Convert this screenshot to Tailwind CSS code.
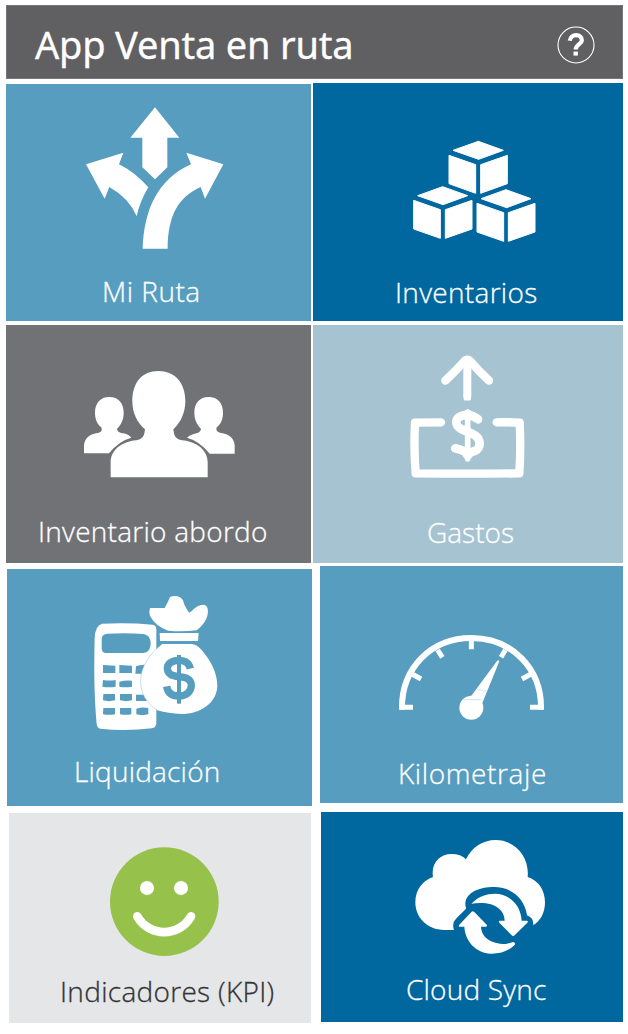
<!DOCTYPE html>
<html lang="es">
<head>
    <meta charset="UTF-8">
    <meta name="viewport" content="width=device-width, initial-scale=1.0">
    <title>App Venta en ruta</title>
    <script src="https://cdn.jsdelivr.net/npm/@tailwindcss/browser@4"></script>
</head>
<body class="bg-white">
    <div class="w-[628px] h-[1034px] pt-[5px] pl-[6px] overflow-hidden font-['Open_Sans',sans-serif] text-white">
        <header class="w-[617px] h-[74px] bg-[#606062] border border-[#77777a] flex items-center justify-between pl-[28px] pr-[27px]">
            <h1 class="text-[38px] leading-none tracking-[-0.2px] pt-[3px] whitespace-nowrap font-['Noto_Sans',sans-serif] [-webkit-text-stroke:0.3px_white]">App Venta en ruta</h1>
            <svg class="w-[38px] h-[38px] mt-[6px]" viewBox="0 0 38 38" fill="none" stroke="white">
                <circle cx="19" cy="19" r="18" stroke-width="1.1"/>
                <path d="M12.8 14.8C13.2 11 16 9.2 19.1 9.2C22.6 9.2 24.9 11.2 24.9 14.2C24.9 18.2 18.7 18.3 18.7 23.6" stroke-width="4.2"/>
                <path d="M18.7 25.6v4" stroke-width="4.4"/>
            </svg>
        </header>

        <main class="flex items-start gap-[2px] mt-[4px] text-[28px] leading-[32px] font-light whitespace-nowrap [-webkit-text-stroke:0.3px_currentColor]">
            <!-- Columna izquierda -->
            <div class="w-[305px] shrink-0 mt-px">
                <section class="w-[305px] h-[237px] bg-[#569dc0] flex flex-col items-start">
                    <svg class="w-[170px] h-[170px] ml-[64px] mt-[6px] shrink-0" viewBox="0 0 510 510" fill="white">
                        <path d="M255 52L328 143H292V232L255 268L217 232V143H181Z"/>
                        <path d="M48 223L160 188L147 223Q194 246 235 292Q210 333 200 379Q177 324 118 291L104 326Z"/>
                        <path d="M218 476C222 360 263 268 363 223L349 188L460 223L405 326L392 291C324 322 294 376 293 476Z"/>
                    </svg>
                    <p class="mt-[15px] ml-[96px] tracking-[0.5px]">Mi Ruta</p>
                </section>

                <section class="w-[305px] h-[238px] mt-[4px] bg-[#717276] flex flex-col items-start">
                    <svg class="w-[180px] h-[130px] ml-[64px] mt-[35px] shrink-0" viewBox="0 0 540 390" fill="white">
                        <path d="M265 33C313 33 346 66 346 124C346 159 331 189 310 208C312 228 317 238 336 241C379 245 413 270 413 307V352H122V307C122 270 156 245 199 241C218 238 223 228 225 208C202 189 187 159 187 124C187 66 217 33 265 33Z"/>
                        <path d="M118 111C145 111 161 129 161 158C161 178 154 194 141 206C143 217 151 218 161 220Q177 224 184 233Q146 243 117 280H42V258C42 234 62 221 83 219C94 217 97 213 94 202C82 193 75 178 75 158C75 129 91 111 118 111Z"/>
                        <path d="M416 111C389 111 373 129 373 158C373 178 381 194 393 206C391 217 384 219 373 221Q358 226 351 233Q389 243 419 281H494V258C494 234 474 221 454 219C443 217 437 213 440 202C452 193 459 178 459 158C459 129 443 111 416 111Z"/>
                    </svg>
                    <p class="mt-[25px] ml-[32px] tracking-[0.25px]">Inventario abordo</p>
                </section>

                <section class="w-[305px] h-[237px] mt-[6px] ml-px bg-[#569dc0] flex flex-col items-start">
                    <svg class="w-[150px] h-[150px] ml-[73px] mt-[21px] shrink-0" viewBox="0 0 450 450" fill="white">
                        <path d="M66 101Q145 97 217 104Q229 105 229 118V400Q228 414 216 415Q135 424 61 416Q52 415 50 402Q40 300 44 145Q45 107 66 101Z"/>
                        <g fill="#569dc0">
                            <path d="M82 131Q140 128 190 132Q212 136 212 160Q212 188 190 189H76Q65 187 65 175V146Q66 133 82 131Z"/>
                            <path d="M69 225L106 227V249H69ZM118 225L156 227V249H118ZM168 229Q183 222 204 225V251H166Z"/>
                            <path d="M69 270Q87 273 107 270V290Q86 294 67 290ZM118 275Q136 270 156 272V290Q137 293 118 290Z"/>
                            <path d="M70 312H105V331Q87 336 69 331ZM120 312H156V331Q138 336 120 331ZM168 314H204V333H168Z"/>
                            <path d="M70 354H105V373Q87 376 69 373ZM120 354H154V373Q137 376 120 373ZM169 356Q187 350 205 354V373Q185 378 169 373Z"/>
                        </g>
                        <path d="M247 162H334Q350 162 365 180C395 215 412 252 412 287C411 338 362 372 304 372Q265 371 232 361C200 341 182 310 182 273C182 230 210 190 247 162Z"/>
                        <path d="M247 162C210 190 182 230 182 273C182 310 200 341 232 361" fill="none" stroke="#a9cee0" stroke-width="2"/>
                        <path d="M239 129H356L354 153H240Z"/>
                        <path d="M210 54H254Q264 37 270 21C283 15 302 17 309 31Q314 52 328 68C339 62 348 44 372 44C388 47 385 73 379 86Q370 105 350 121Q305 126 264 122Q226 108 210 78Q206 64 210 54Z"/>
                        <path d="M297 195V341" stroke="#569dc0" stroke-width="12"/>
                        <path d="M331 236C326 214 310 211 296 211C275 211 262 222 262 235C262 275 334 245 334 286C334 307 316 318 297 318C275 318 263 308 260 289" fill="none" stroke="#569dc0" stroke-width="22"/>
                    </svg>
                    <p class="mt-[15px] ml-[67px] tracking-[0.2px]">Liquidación</p>
                </section>

                <section class="w-[302px] h-[210px] mt-[7px] ml-[3px] bg-[#e5e6e8] flex flex-col items-start">
                    <svg class="w-[130px] h-[125px] ml-[91px] mt-[27px] shrink-0" viewBox="0 0 390 375" fill="white">
                        <circle cx="193" cy="185" r="163" fill="#96c14b"/>
                        <circle cx="141" cy="144" r="21"/>
                        <circle cx="243" cy="144" r="21"/>
                        <path d="M112 229C147 292 238 292 273 229" fill="none" stroke="white" stroke-width="26" stroke-linecap="round"/>
                    </svg>
                    <p class="mt-[10px] ml-[51px] tracking-[0.3px] text-[#333335]">Indicadores (KPI)</p>
                </section>
            </div>

            <!-- Columna derecha -->
            <div class="w-[310px] shrink-0">
                <section class="w-[310px] h-[238px] bg-[#00679f] flex flex-col items-start">
                    <svg class="w-[150px] h-[120px] ml-[87px] mt-[47px] shrink-0" viewBox="0 0 450 360" fill="white" stroke="white" stroke-width="3" stroke-linejoin="round">
                        <path d="M235 34L310 61L236 88L159 61Z"/>
                        <path d="M147 76L227 104V190L147 161ZM322 76L242 104V190L322 161Z"/>
                        <path d="M128 170L203 197L129 224L53 197Z"/>
                        <path d="M41 211L121 239V325L41 297ZM216 211L136 239V325L216 297Z"/>
                        <path d="M318 179L393 206L320 233L243 206Z"/>
                        <path d="M231 220L311 248V334L231 306ZM405 220L325 248V334L405 306Z"/>
                    </svg>
                    <p class="mt-[26px] ml-[82px] tracking-[0.3px]">Inventarios</p>
                </section>

                <section class="w-[310px] h-[238px] mt-[4px] bg-[#a6c3d2] flex flex-col items-start">
                    <svg class="w-[150px] h-[140px] ml-[82px] mt-[20px] shrink-0" viewBox="0 0 450 420" fill="none" stroke="white" stroke-width="25" stroke-linecap="round" stroke-linejoin="round">
                        <path d="M151 107Q181 79 206 51Q217 37 228 51Q252 79 282 107"/>
                        <path d="M217 50V155" stroke-linecap="butt" stroke-width="24"/>
                        <path d="M207 150H226L225 164H209Z" fill="white" stroke-width="5"/>
                        <path d="M138 232Q100 232 60 233Q56 310 62 385Q215 387 373 385Q378 310 374 233Q340 231 305 232"/>
                        <path d="M218 203V341" stroke-width="17"/>
                        <path d="M208 202L218 196L230 203M207 332L218 345L230 332" stroke-width="8"/>
                        <path d="M249 223C232 208 204 206 189 219C180 229 184 244 197 251C217 263 253 266 254 295C254 319 230 324 210 320Q196 313 181 310" stroke-width="26"/>
                    </svg>
                    <p class="mt-[31px] ml-[114px]">Gastos</p>
                </section>

                <section class="w-[303px] h-[237px] mt-[3px] ml-[7px] bg-[#569dc0] flex flex-col items-start">
                    <svg class="w-[170px] h-[110px] ml-[70px] mt-[54px] shrink-0" viewBox="0 0 510 330" fill="none" stroke="white">
                        <path d="M36 269C33 143 125 54 244 54C363 54 456 143 453 269" stroke-width="18"/>
                        <path d="M29 262H69M420 262H460M244 57V88M66 162L93 177M143 90L157 112M346 90L333 112M423 162L396 177" stroke-width="15" stroke-linejoin="round"/>
                        <path d="M321 123Q325 118 328 124L277 249L243 229Z" fill="white" stroke="none"/>
                        <circle cx="244" cy="263" r="36" fill="white" stroke="none"/>
                        <path d="M218 239H274M263 210L272 208L280 214L290 211" stroke="#b9d7e6" stroke-width="2"/>
                    </svg>
                    <p class="mt-[27px] ml-[78px] tracking-[0.6px]">Kilometraje</p>
                </section>

                <section class="w-[302px] h-[210px] mt-[9px] ml-[8px] bg-[#00679f] flex flex-col items-start">
                    <svg class="w-[150px] h-[135px] ml-[84px] mt-[18px] shrink-0" viewBox="0 0 450 405" fill="white">
                        <path d="M147 300H118C67 300 31 263 31 217C31 177 55 151 84 141C77 99 105 72 139 72Q168 72 183 88C199 53 233 30 272 30C330 30 374 80 368 141C400 151 420 180 420 217C420 250 405 274 385 286Q386 263 366 256C359 207 321 171 268 171C221 171 181 188 181 223L183 236L153 266Q140 278 147 300Z"/>
                        <path d="M199 221C221 199 245 191 269 191C314 191 348 226 350 272H365Q371 273 367 278L329 316Q324 320 320 316L283 278Q279 273 285 272H299C299 237 264 211 199 221Z"/>
                        <path d="M164 290Q159 289 163 284L200 245Q204 242 208 246L245 284Q248 289 243 290H228C229 320 256 342 302 342Q314 340 325 336Q334 339 328 346C311 363 284 372 257 371C213 369 180 333 178 290Z"/>
                    </svg>
                    <p class="mt-[8px] ml-[85px] tracking-[0.2px]">Cloud Sync</p>
                </section>
            </div>
        </main>
    </div>
</body>
</html>
